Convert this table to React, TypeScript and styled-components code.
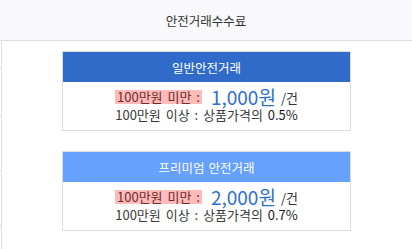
import styled, { createGlobalStyle } from "styled-components";

const GlobalStyle = createGlobalStyle`
  html, body {
    margin: 0;
    padding: 0;
    background: #fff;
    font-family: "Noto Sans CJK KR", "Noto Sans", sans-serif;
    color: #333;
  }
`;

const Page = styled.div`
  width: 412px;
  height: 249px;
  overflow: hidden;
  display: flex;
  flex-direction: column;
`;

const Header = styled.div`
  height: 40px;
  display: flex;
  align-items: center;
  justify-content: center;
  background: #f9f8fb;
  border-bottom: 1px solid #dedede;
  font-size: 12.5px;
  color: #333;
`;

const Body = styled.div`
  flex: 1;
  display: flex;
`;

const SideColumn = styled.div`
  width: 1px;
  border-right: 1px solid #dedede;
  display: flex;
  flex-direction: column;
`;

const SideCell = styled.div<{ $h: number }>`
  height: ${({ $h }) => $h}px;
  flex-shrink: 0;
  border-bottom: 1px solid #dedede;
`;

const Cards = styled.div`
  flex: 1;
  display: flex;
  flex-direction: column;
  align-items: center;
  gap: 20px;
  padding-top: 10px;
  padding-right: 1px;
`;

const Card = styled.div`
  width: 287px;
  border: 1px solid #dcdcdc;
  background: #fff;
`;

const CardTitle = styled.div<{ $tone: "basic" | "premium" }>`
  height: 30px;
  display: flex;
  align-items: center;
  justify-content: center;
  background: ${({ $tone }) => ($tone === "basic" ? "#306bc9" : "#66a1fe")};
  color: #fff;
  font-size: 12.5px;
  word-spacing: 1px;
`;

const CardBody = styled.div`
  height: 48px;
  padding-top: 5px;
  box-sizing: border-box;
  text-align: center;
`;

const PriceLine = styled.div`
  height: 20px;
  display: flex;
  align-items: center;
  justify-content: center;
  font-size: 13px;
  white-space: pre;
  word-spacing: 2px;
`;

const Mark = styled.span`
  display: inline-block;
  height: 14px;
  line-height: 14px;
  padding: 0 2px;
  background: #ffbaba;
  color: #6e2c2c;
`;

const Price = styled.span`
  display: inline-block;
  height: 20px;
  font-size: 19px;
  line-height: 20px;
  color: #2f6fce;
  margin: 0 5px 0 9px;
`;

const Unit = styled.span`
  color: #333;
`;

const RateLine = styled.div`
  height: 15px;
  line-height: 15px;
  font-size: 13px;
  word-spacing: 2px;
  color: #3a3a3a;
`;

const Rate = styled.span`
  color: #1a1a2a;
`;

const plans = [
  { tone: "basic" as const, name: "일반안전거래", price: "1,000원", rate: "0.5%" },
  { tone: "premium" as const, name: "프리미엄 안전거래", price: "2,000원", rate: "0.7%" },
];

export default function App() {
  return (
    <Page>
      <GlobalStyle />
      <Header>안전거래수수료</Header>
      <Body>
        <SideColumn>
          <SideCell $h={26} />
          <SideCell $h={47} />
          <SideCell $h={54} />
          <SideCell $h={54} />
        </SideColumn>
        <Cards>
          {plans.map((p) => (
            <Card key={p.tone}>
              <CardTitle $tone={p.tone}>{p.name}</CardTitle>
              <CardBody>
                <PriceLine>
                  <Mark>100만원 미만 :</Mark>
                  <Price>{p.price}</Price>
                  <Unit>/건</Unit>
                </PriceLine>
                <RateLine>
                  100만원 이상 : 상품가격의 <Rate>{p.rate}</Rate>
                </RateLine>
              </CardBody>
            </Card>
          ))}
        </Cards>
      </Body>
    </Page>
  );
}
